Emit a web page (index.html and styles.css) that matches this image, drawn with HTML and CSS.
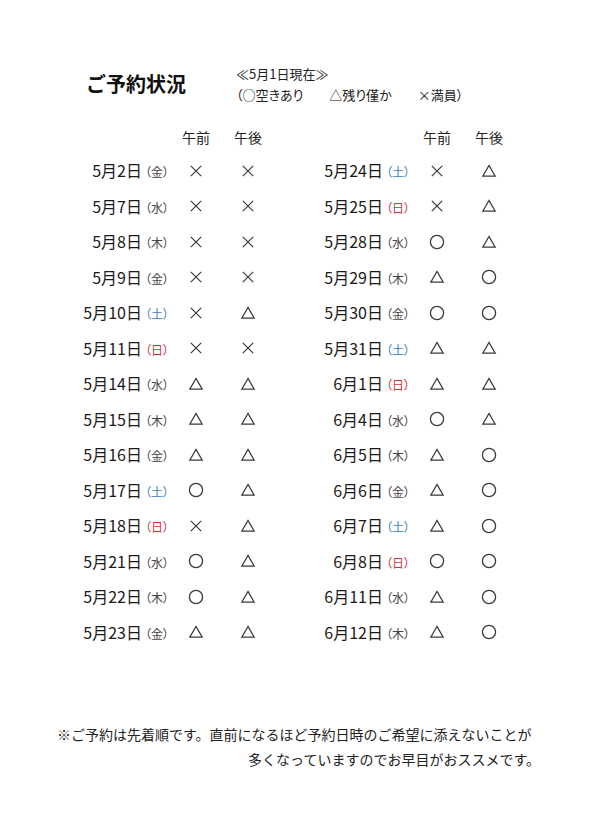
FILE: index.html
```html
<!DOCTYPE html>
<html lang="ja">
<head>
<meta charset="utf-8">
<link rel="stylesheet" href="styles.css">
</head>
<body>
<svg class="defs" width="0" height="0" aria-hidden="true">
  <symbol id="o" viewBox="0 0 16 16"><circle cx="8" cy="8" r="6.6" fill="none" stroke="currentColor" stroke-width="1.3"/></symbol>
  <symbol id="t" viewBox="0 0 16 16"><path d="M8 2.4 L14.2 13.2 L1.8 13.2 Z" fill="none" stroke="currentColor" stroke-width="1.2" stroke-linejoin="miter"/></symbol>
  <symbol id="x" viewBox="0 0 16 16"><path d="M2.8 2.8 L13.2 13.2 M13.2 2.8 L2.8 13.2" fill="none" stroke="currentColor" stroke-width="1.2"/></symbol>
</svg>
<div class="page">
  <header class="head">
    <h1 class="title">ご予約状況</h1>
    <div class="sub">
      <div class="sub-line">≪5月1日現在≫</div>
      <div class="sub-line">（○空きあり　　△残り僅か　　×満員）</div>
    </div>
  </header>

  <div class="tables">
    <div class="tbl">
      <div class="hd"></div><div class="hd">午前</div><div class="hd">午後</div>
      <div class="d">5月2日<span class="w">（金）</span></div><div class="s"><svg class="ic" aria-label="×"><use href="#x"/></svg></div><div class="s"><svg class="ic" aria-label="×"><use href="#x"/></svg></div>
      <div class="d">5月7日<span class="w">（水）</span></div><div class="s"><svg class="ic" aria-label="×"><use href="#x"/></svg></div><div class="s"><svg class="ic" aria-label="×"><use href="#x"/></svg></div>
      <div class="d">5月8日<span class="w">（木）</span></div><div class="s"><svg class="ic" aria-label="×"><use href="#x"/></svg></div><div class="s"><svg class="ic" aria-label="×"><use href="#x"/></svg></div>
      <div class="d">5月9日<span class="w">（金）</span></div><div class="s"><svg class="ic" aria-label="×"><use href="#x"/></svg></div><div class="s"><svg class="ic" aria-label="×"><use href="#x"/></svg></div>
      <div class="d">5月10日<span class="w sat">（土）</span></div><div class="s"><svg class="ic" aria-label="×"><use href="#x"/></svg></div><div class="s"><svg class="ic" aria-label="△"><use href="#t"/></svg></div>
      <div class="d">5月11日<span class="w sun">（日）</span></div><div class="s"><svg class="ic" aria-label="×"><use href="#x"/></svg></div><div class="s"><svg class="ic" aria-label="×"><use href="#x"/></svg></div>
      <div class="d">5月14日<span class="w">（水）</span></div><div class="s"><svg class="ic" aria-label="△"><use href="#t"/></svg></div><div class="s"><svg class="ic" aria-label="△"><use href="#t"/></svg></div>
      <div class="d">5月15日<span class="w">（木）</span></div><div class="s"><svg class="ic" aria-label="△"><use href="#t"/></svg></div><div class="s"><svg class="ic" aria-label="△"><use href="#t"/></svg></div>
      <div class="d">5月16日<span class="w">（金）</span></div><div class="s"><svg class="ic" aria-label="△"><use href="#t"/></svg></div><div class="s"><svg class="ic" aria-label="△"><use href="#t"/></svg></div>
      <div class="d">5月17日<span class="w sat">（土）</span></div><div class="s"><svg class="ic" aria-label="○"><use href="#o"/></svg></div><div class="s"><svg class="ic" aria-label="△"><use href="#t"/></svg></div>
      <div class="d">5月18日<span class="w sun">（日）</span></div><div class="s"><svg class="ic" aria-label="×"><use href="#x"/></svg></div><div class="s"><svg class="ic" aria-label="△"><use href="#t"/></svg></div>
      <div class="d">5月21日<span class="w">（水）</span></div><div class="s"><svg class="ic" aria-label="○"><use href="#o"/></svg></div><div class="s"><svg class="ic" aria-label="△"><use href="#t"/></svg></div>
      <div class="d">5月22日<span class="w">（木）</span></div><div class="s"><svg class="ic" aria-label="○"><use href="#o"/></svg></div><div class="s"><svg class="ic" aria-label="△"><use href="#t"/></svg></div>
      <div class="d">5月23日<span class="w">（金）</span></div><div class="s"><svg class="ic" aria-label="△"><use href="#t"/></svg></div><div class="s"><svg class="ic" aria-label="△"><use href="#t"/></svg></div>
    </div>
    <div class="tbl">
      <div class="hd"></div><div class="hd">午前</div><div class="hd">午後</div>
      <div class="d">5月24日<span class="w sat">（土）</span></div><div class="s"><svg class="ic" aria-label="×"><use href="#x"/></svg></div><div class="s"><svg class="ic" aria-label="△"><use href="#t"/></svg></div>
      <div class="d">5月25日<span class="w sun">（日）</span></div><div class="s"><svg class="ic" aria-label="×"><use href="#x"/></svg></div><div class="s"><svg class="ic" aria-label="△"><use href="#t"/></svg></div>
      <div class="d">5月28日<span class="w">（水）</span></div><div class="s"><svg class="ic" aria-label="○"><use href="#o"/></svg></div><div class="s"><svg class="ic" aria-label="△"><use href="#t"/></svg></div>
      <div class="d">5月29日<span class="w">（木）</span></div><div class="s"><svg class="ic" aria-label="△"><use href="#t"/></svg></div><div class="s"><svg class="ic" aria-label="○"><use href="#o"/></svg></div>
      <div class="d">5月30日<span class="w">（金）</span></div><div class="s"><svg class="ic" aria-label="○"><use href="#o"/></svg></div><div class="s"><svg class="ic" aria-label="○"><use href="#o"/></svg></div>
      <div class="d">5月31日<span class="w sat">（土）</span></div><div class="s"><svg class="ic" aria-label="△"><use href="#t"/></svg></div><div class="s"><svg class="ic" aria-label="△"><use href="#t"/></svg></div>
      <div class="d">6月1日<span class="w sun">（日）</span></div><div class="s"><svg class="ic" aria-label="△"><use href="#t"/></svg></div><div class="s"><svg class="ic" aria-label="△"><use href="#t"/></svg></div>
      <div class="d">6月4日<span class="w">（水）</span></div><div class="s"><svg class="ic" aria-label="○"><use href="#o"/></svg></div><div class="s"><svg class="ic" aria-label="△"><use href="#t"/></svg></div>
      <div class="d">6月5日<span class="w">（木）</span></div><div class="s"><svg class="ic" aria-label="△"><use href="#t"/></svg></div><div class="s"><svg class="ic" aria-label="○"><use href="#o"/></svg></div>
      <div class="d">6月6日<span class="w">（金）</span></div><div class="s"><svg class="ic" aria-label="△"><use href="#t"/></svg></div><div class="s"><svg class="ic" aria-label="○"><use href="#o"/></svg></div>
      <div class="d">6月7日<span class="w sat">（土）</span></div><div class="s"><svg class="ic" aria-label="△"><use href="#t"/></svg></div><div class="s"><svg class="ic" aria-label="○"><use href="#o"/></svg></div>
      <div class="d">6月8日<span class="w sun">（日）</span></div><div class="s"><svg class="ic" aria-label="○"><use href="#o"/></svg></div><div class="s"><svg class="ic" aria-label="○"><use href="#o"/></svg></div>
      <div class="d">6月11日<span class="w">（水）</span></div><div class="s"><svg class="ic" aria-label="△"><use href="#t"/></svg></div><div class="s"><svg class="ic" aria-label="○"><use href="#o"/></svg></div>
      <div class="d">6月12日<span class="w">（木）</span></div><div class="s"><svg class="ic" aria-label="△"><use href="#t"/></svg></div><div class="s"><svg class="ic" aria-label="○"><use href="#o"/></svg></div>
    </div>
  </div>

  <div class="note">
    <p class="note-line">※ご予約は先着順です。直前になるほど予約日時のご希望に添えないことが</p>
    <p class="note-line right">多くなっていますのでお早目がおススメです。</p>
  </div>
</div>
</body>
</html>
```

FILE: styles.css
```css
* { box-sizing: border-box; }
html, body {
  margin: 0;
  padding: 0;
  background: #ffffff;
}
body {
  font-family: "Noto Sans CJK JP", "Noto Sans", sans-serif;
  color: #222222;
  width: 595px;
  height: 836px;
}
.defs {
  position: absolute;
  width: 0;
  height: 0;
  overflow: hidden;
}
.page {
  padding-top: 63px;
}
.head {
  display: flex;
  align-items: flex-start;
  padding-left: 86px;
}
.title {
  margin: 9px 0 0 0;
  font-size: 20px;
  font-weight: 700;
  line-height: 24px;
  color: #111111;
  width: 150px;
}
.sub {
  font-size: 13px;
  line-height: 21px;
  color: #222222;
  font-feature-settings: "palt";
}
.sub-line {
  white-space: pre;
}
.tables {
  display: flex;
  padding-left: 60px;
  margin-top: 16px;
  gap: 27px;
}
.tbl {
  display: grid;
  grid-template-columns: 110px 52px 52px;
  grid-template-rows: 32px repeat(14, 35.5px);
}
.hd {
  font-size: 14px;
  line-height: 32px;
  text-align: center;
  color: #222222;
}
.d {
  font-size: 16px;
  line-height: 35.5px;
  text-align: right;
  color: #1a1a1a;
  white-space: nowrap;
  padding-right: 1px;
}
.w {
  font-size: 12px;
  margin-left: 3px;
  color: #444444;
  font-feature-settings: "palt";
}
.w.sat { color: #3b7fc0; }
.w.sun { color: #d0343a; }
.s {
  display: flex;
  align-items: center;
  justify-content: center;
  color: #3a3a3a;
}
.ic {
  width: 16px;
  height: 16px;
  display: block;
}
.note {
  margin-top: 72px;
  padding-left: 57px;
  width: 540px;
  font-size: 14px;
  color: #222222;
}
.note-line {
  margin: 0;
  line-height: 25px;
  white-space: nowrap;
}
.note-line.right {
  text-align: right;
}
```
